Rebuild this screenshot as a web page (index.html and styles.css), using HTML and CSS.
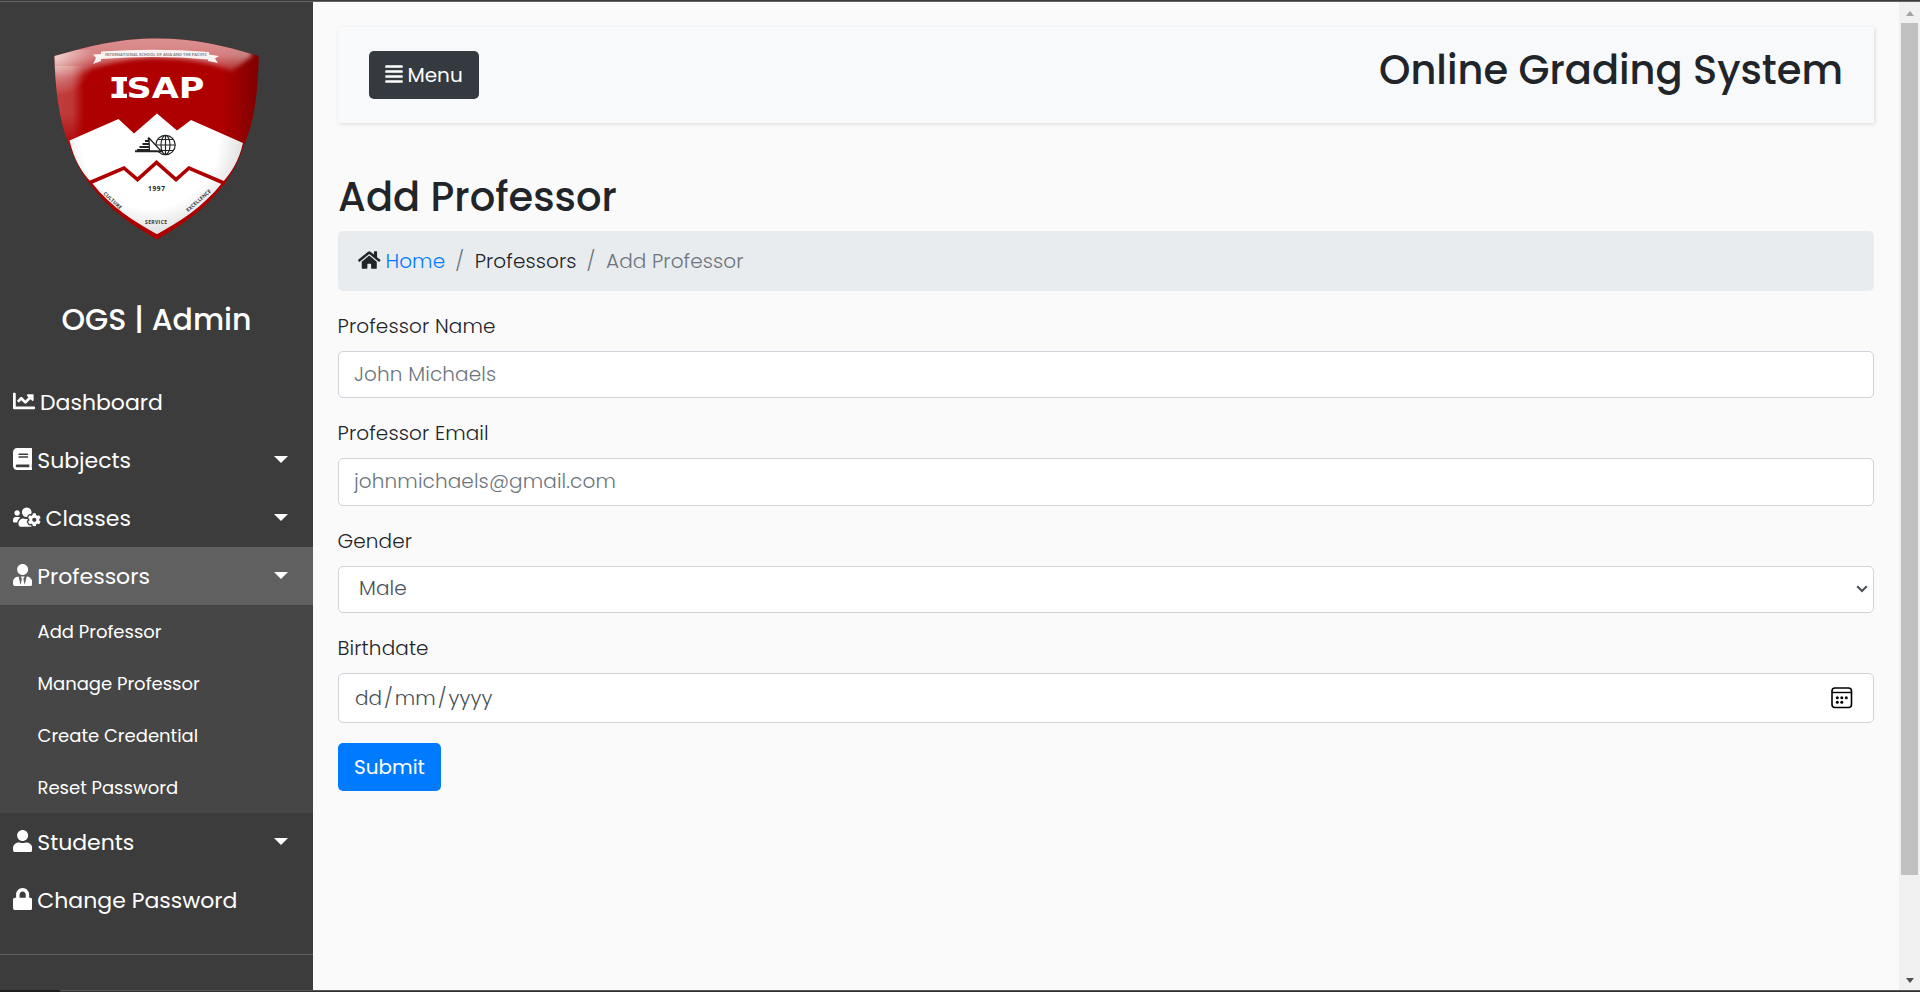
FILE: index.html
```html
<!DOCTYPE html>
<html lang="en">
<head>
<meta charset="utf-8">
<title>Online Grading System</title>
<link rel="stylesheet" href="styles.css">
</head>
<body>
<div class="screen">
  <div class="edge-top"></div>
  <div class="window">
    <nav class="sidebar">
      <div class="brand">
        <svg class="shield" width="313" height="250" viewBox="0 2 313 250">
          <defs>
            <clipPath id="body"><path d="M54.500 56C90 46 118 38.500 157 38.500S225 46 258.700 56C258 84 256 118 244 145C238 163 232 174 224 184C205 210 182 225 157 239.500C132 225 109 210 90 184C82 174 76 163 69 145C58 118 55 84 54.500 56Z"/></clipPath>
            <linearGradient id="gloss" x1="0" y1="0" x2="0" y2="1"><stop offset="0" stop-color="#fff" stop-opacity=".62"/><stop offset=".6" stop-color="#fff" stop-opacity=".5"/><stop offset="1" stop-color="#fff" stop-opacity=".05"/></linearGradient>
            <radialGradient id="corner" gradientUnits="userSpaceOnUse" cx="56" cy="58" r="38"><stop offset="0" stop-color="#fff" stop-opacity=".65"/><stop offset="1" stop-color="#fff" stop-opacity="0"/></radialGradient>
            <linearGradient id="side" x1="0" y1="0" x2="1" y2="0"><stop offset="0" stop-color="#fff" stop-opacity=".24"/><stop offset=".65" stop-color="#fff" stop-opacity=".22"/><stop offset="1" stop-color="#fff" stop-opacity="0"/></linearGradient>
            <linearGradient id="fall" x1="0" y1="0" x2="0" y2="1"><stop offset="0" stop-color="#fff"/><stop offset=".6" stop-color="#fff"/><stop offset="1" stop-color="#000"/></linearGradient>
            <mask id="fade"><rect x="50" y="60" width="40" height="90" fill="url(#fall)"/></mask>
            <linearGradient id="shade" x1="0" y1="0" x2="1" y2="0"><stop offset="0" stop-color="#300" stop-opacity="0"/><stop offset="1" stop-color="#300" stop-opacity=".4"/></linearGradient>
            <radialGradient id="snow" gradientUnits="userSpaceOnUse" cx="150" cy="140" r="95"><stop offset=".72" stop-color="#fff"/><stop offset="1" stop-color="#dedede"/></radialGradient>
            <filter id="soft"><feGaussianBlur stdDeviation="2"/></filter>
          </defs>
          <g clip-path="url(#body)">
            <path fill="#ae0000" d="M50 35h213v210H50z"/>
            <path fill="url(#shade)" d="M222 50h38v150h-38z"/>
            <path fill="url(#side)" mask="url(#fade)" d="M50 66h34v84H50z"/>
            <path fill="url(#gloss)" filter="url(#soft)" d="M45 25H244L252 56L232 71C205 61 180 58 157 58S105 62 75 76H45Z"/>
            <path fill="url(#corner)" d="M50 50h50v50H50z"/>
          </g>
          <path fill="url(#snow)" d="M69.500 140.500L118.500 119L134 133.500L157 113.500L177 130.500L191 120L243 143C239 160 232 172 222 183C202 208 179 222 157 234.300C135 222 112 208 92 183C81 172 74 159 69.500 140.500Z"/>
          <path fill="none" stroke="#ae0000" stroke-width="3.600" d="M89 183L124 168L137.500 179.500L156.500 162.500L176 179.500L189 168L225 183.500"/>
          <path fill="#fff" fill-opacity=".9" d="M93 64L96 58L93 54.500L101 54V51.500Q157 48 209 52V54.500L219 56L215 58.500L218 63L208 61V59.500Q157 55 101 59V61Z"/>
          <text class="motto" x="105" y="56.300" textLength="102">INTERNATIONAL SCHOOL OF ASIA AND THE PACIFIC</text>
          <text class="isap" x="113.500" y="98" textLength="91" lengthAdjust="spacingAndGlyphs">ISAP</text>
          <path fill="#fff" d="M111.500 77h15.500v4.300h-15.500zM111.500 93.700h15.500V98h-15.500z"/>
          <g fill="none" stroke="#222" stroke-width="1.200">
            <circle cx="165.500" cy="145" r="9.700"/><ellipse cx="165.500" cy="145" rx="4.500" ry="9.700"/>
            <path d="M165.500 135.500v19M156 145h19M158 139.500h15M158 150.500h15"/>
            <path fill="#fff" d="M149 138L161.500 151.500H149.500Z"/>
            <path stroke-width="1.900" d="M149 138l-1 1.500M149 141h-4M149 144h-6.500M149 147h-9.500M149 150h-12M135 151.300h27.500"/>
          </g>
          <text class="tiny year" x="148" y="191" textLength="17">1997</text>
          <text class="tiny" x="145" y="224" textLength="22">SERVICE</text>
          <text class="tiny" transform="translate(103 194) rotate(43)" textLength="23">CULTURE</text>
          <text class="tiny" transform="translate(188 212) rotate(-41)" textLength="31">EXCELLENCE</text>
        </svg>
        <h3 class="brand-name">OGS | Admin</h3>
      </div>
      <ul class="menu">
        <li class="item"><svg class="icon" viewBox="0 0 512 512"><path d="M496 384H64V80c0-8.840-7.160-16-16-16H16C7.160 64 0 71.160 0 80v336c0 17.670 14.330 32 32 32h464c8.840 0 16-7.160 16-16v-32c0-8.840-7.160-16-16-16zM464 96H345.940c-21.380 0-32.090 25.850-16.970 40.970l32.400 32.400L288 242.750l-73.370-73.370c-12.500-12.500-32.760-12.500-45.250 0l-68.690 68.690c-6.250 6.250-6.250 16.380 0 22.630l22.620 22.620c6.250 6.250 16.380 6.250 22.630 0L192 237.250l73.370 73.370c12.500 12.500 32.760 12.500 45.250 0l96-96 32.400 32.400c15.120 15.120 40.970 4.410 40.970-16.970V112c.010-8.840-7.150-16-15.990-16z"/></svg><span>Dashboard</span></li>
        <li class="item"><svg class="icon" viewBox="0 0 448 512"><path d="M448 360V24c0-13.300-10.700-24-24-24H96C43 0 0 43 0 96v320c0 53 43 96 96 96h328c13.300 0 24-10.700 24-24v-16c0-7.500-3.500-14.300-8.900-18.700-4.200-15.400-4.200-59.300 0-74.700 5.400-4.300 8.900-11.100 8.900-18.600zM128 134c0-3.300 2.700-6 6-6h212c3.300 0 6 2.700 6 6v20c0 3.300-2.700 6-6 6H134c-3.300 0-6-2.700-6-6v-20zm0 64c0-3.300 2.700-6 6-6h212c3.300 0 6 2.700 6 6v20c0 3.300-2.700 6-6 6H134c-3.300 0-6-2.700-6-6v-20zm253.400 250H96c-17.700 0-32-14.300-32-32 0-17.600 14.400-32 32-32h285.400c-1.900 17.100-1.900 46.900 0 64z"/></svg><span>Subjects</span><i class="caret"></i></li>
        <li class="item"><svg class="icon" viewBox="0 0 640 512"><path d="M610.500 341.300c2.600-14.100 2.600-28.500 0-42.600l25.800-14.900c3-1.700 4.300-5.200 3.300-8.500-6.700-21.600-18.200-41.200-33.200-57.400-2.300-2.500-6-3.100-9-1.400l-25.800 14.900c-10.900-9.300-23.400-16.500-36.900-21.300v-29.800c0-3.400-2.400-6.400-5.700-7.100-22.300-5-45-4.800-66.200 0-3.300.7-5.700 3.700-5.700 7.100v29.800c-13.500 4.800-26 12-36.900 21.300l-25.800-14.900c-2.900-1.700-6.700-1.100-9 1.400-15 16.200-26.500 35.800-33.200 57.400-1 3.300.4 6.800 3.300 8.500l25.800 14.900c-2.600 14.100-2.600 28.500 0 42.600l-25.800 14.900c-3 1.700-4.300 5.200-3.300 8.500 6.700 21.600 18.200 41.100 33.200 57.400 2.300 2.500 6 3.100 9 1.400l25.800-14.900c10.900 9.300 23.400 16.500 36.900 21.300v29.800c0 3.400 2.400 6.400 5.700 7.100 22.300 5 45 4.800 66.200 0 3.300-.7 5.700-3.700 5.700-7.100v-29.800c13.500-4.800 26-12 36.900-21.300l25.800 14.900c2.900 1.700 6.700 1.100 9-1.400 15-16.200 26.500-35.800 33.200-57.400 1-3.300-.4-6.800-3.300-8.500l-25.800-14.900zM496 368.500c-26.800 0-48.500-21.800-48.500-48.500s21.800-48.500 48.500-48.500 48.500 21.800 48.500 48.500-21.700 48.500-48.500 48.500zM96 224c35.300 0 64-28.700 64-64s-28.700-64-64-64-64 28.700-64 64 28.700 64 64 64zm224 32c1.900 0 3.700-.5 5.600-.6 8.300-21.700 20.500-42.100 36.300-59.200 7.400-8 17.900-12.600 28.900-12.600 6.900 0 13.700 1.800 19.600 5.300l7.900 4.600c.8-.5 1.600-.9 2.400-1.400 7-14.600 11.200-30.800 11.200-48 0-61.900-50.100-112-112-112S208 82.100 208 144c0 61.900 50.100 112 112 112zm105.200 194.500c-2.300-1.200-4.600-2.600-6.800-3.900-8.200 4.800-15.300 9.800-27.500 9.800-10.900 0-21.400-4.600-28.900-12.600-18.300-19.800-32.300-43.900-40.200-69.600-10.700-34.500 24.900-49.700 25.800-50.300-.1-2.600-.1-5.200 0-7.800l-7.900-4.600c-3.800-2.200-7-5-9.800-8.100-3.300.2-6.500.6-9.800.6-24.600 0-47.600-6-68.500-16h-8.300C179.600 288 128 339.600 128 403.200V432c0 26.500 21.500 48 48 48h255.400c-3.700-6-6.200-12.800-6.200-20.300v-9.200zM173.100 274.600C161.500 263.100 145.600 256 128 256H64c-35.300 0-64 28.700-64 64v32c0 17.700 14.300 32 32 32h65.900c6.300-47.400 34.900-87.300 75.200-109.400z"/></svg><span>Classes</span><i class="caret"></i></li>
        <li class="item active"><svg class="icon" viewBox="0 0 448 512"><path d="M224 256c70.700 0 128-57.300 128-128S294.700 0 224 0 96 57.300 96 128s57.300 128 128 128zm95.800 32.600L272 480l-32-136 32-56h-96l32 56-32 136-47.800-191.400C56.900 292 0 350.300 0 422.400V464c0 26.500 21.500 48 48 48h352c26.500 0 48-21.500 48-48v-41.600c0-72.100-56.900-130.400-128.200-133.800z"/></svg><span>Professors</span><i class="caret"></i></li>
        <li>
          <ul class="submenu">
            <li class="subitem">Add Professor</li>
            <li class="subitem">Manage Professor</li>
            <li class="subitem">Create Credential</li>
            <li class="subitem">Reset Password</li>
          </ul>
        </li>
        <li class="item"><svg class="icon" viewBox="0 0 448 512"><path d="M224 256c70.700 0 128-57.300 128-128S294.700 0 224 0 96 57.300 96 128s57.300 128 128 128zm89.600 32h-16.700c-22.200 10.200-46.900 16-72.900 16s-50.600-5.800-72.900-16h-16.700C60.200 288 0 348.200 0 422.400V464c0 26.500 21.500 48 48 48h352c26.500 0 48-21.500 48-48v-41.600c0-74.200-60.200-134.400-134.400-134.400z"/></svg><span>Students</span><i class="caret"></i></li>
        <li class="item"><svg class="icon" viewBox="0 0 448 512"><path d="M400 224h-24v-72C376 68.200 307.800 0 224 0S72 68.200 72 152v72H48c-26.500 0-48 21.500-48 48v192c0 26.500 21.500 48 48 48h352c26.500 0 48-21.500 48-48V272c0-26.500-21.500-48-48-48zm-104 0H152v-72c0-39.700 32.300-72 72-72s72 32.300 72 72v72z"/></svg><span>Change Password</span></li>
      </ul>
    </nav>
    <main class="content">
      <header class="topbar">
        <button class="btn btn-dark" type="button"><svg class="btn-icon" viewBox="0 0 448 512"><path d="M16 32h416a16 16 0 0 1 16 16v32a16 16 0 0 1-16 16H16A16 16 0 0 1 0 80V48A16 16 0 0 1 16 32zm0 128h416a16 16 0 0 1 16 16v32a16 16 0 0 1-16 16H16a16 16 0 0 1-16-16v-32a16 16 0 0 1 16-16zm0 128h416a16 16 0 0 1 16 16v32a16 16 0 0 1-16 16H16a16 16 0 0 1-16-16v-32a16 16 0 0 1 16-16zm0 128h416a16 16 0 0 1 16 16v32a16 16 0 0 1-16 16H16a16 16 0 0 1-16-16v-32a16 16 0 0 1 16-16z"/></svg>Menu</button>
        <h1 class="title">Online Grading System</h1>
      </header>
      <h1 class="title">Add Professor</h1>
      <ol class="breadcrumb">
        <li class="crumb"><svg class="home" viewBox="0 0 576 512"><path d="M280.370 148.260L96 300.110V464a16 16 0 0 0 16 16l112.060-.29a16 16 0 0 0 15.920-16V368a16 16 0 0 1 16-16h64a16 16 0 0 1 16 16v95.640a16 16 0 0 0 16 16.050L464 480a16 16 0 0 0 16-16V300L295.670 148.260a12.190 12.190 0 0 0-15.300 0zM571.600 251.470L488 182.560V44.050a12 12 0 0 0-12-12h-56a12 12 0 0 0-12 12v72.610L318.470 43a48 48 0 0 0-61 0L4.340 251.470a12 12 0 0 0-1.600 16.900l25.500 31A12 12 0 0 0 45.150 301l235.220-193.740a12.190 12.190 0 0 1 15.300 0L530.900 301a12 12 0 0 0 16.900-1.600l25.500-31a12 12 0 0 0-1.700-16.930z"/></svg><a class="link">Home</a></li>
        <li class="crumb">Professors</li>
        <li class="crumb current">Add Professor</li>
      </ol>
      <form class="form">
        <div class="group"><label class="label">Professor Name</label><input class="control" type="text" placeholder="John Michaels"></div>
        <div class="group"><label class="label">Professor Email</label><input class="control" type="text" placeholder="johnmichaels@gmail.com"></div>
        <div class="group"><label class="label">Gender</label><div class="control select"><span>Male</span><svg class="chevron" width="12" height="8" viewBox="0 0 12 8"><path d="M1.200 1.200L6 6L10.800 1.200"/></svg></div></div>
        <div class="group"><label class="label">Birthdate</label><div class="control date"><span class="date-text"><span>dd</span><span>/</span><span>mm</span><span>/</span><span>yyyy</span></span>
          <svg width="22" height="22" viewBox="0 0 22 22"><rect x="1" y="1" width="19.500" height="19.500" rx="3" fill="none" stroke="#000" stroke-width="1.600"/><path d="M1 5.500h19.500" stroke="#000" stroke-width="1.400"/><g><circle cx="6.300" cy="10.800" r="1.500"/><circle cx="10.800" cy="10.800" r="1.500"/><circle cx="15.300" cy="10.800" r="1.500"/><circle cx="6.300" cy="15.300" r="1.500"/><circle cx="10.800" cy="15.300" r="1.500"/></g></svg></div></div>
        <button class="btn btn-primary" type="button">Submit</button>
      </form>
    </main>
    <div class="scrollbar"><i class="arrow up"></i><div class="track"><div class="thumb"></div></div><i class="arrow down"></i></div>
  </div>
  <div class="edge-bottom"><div class="edge-dark"></div></div>
</div>
</body>
</html>
```
FILE: styles.css
```css
* { box-sizing: border-box; }
body {
  margin: 0;
  overflow: hidden;
  background: #fafafa;
  color: #212529;
  font: 300 20px/30px Poppins, Inter, "Open Sans", sans-serif;
}
ul, ol { list-style: none; margin: 0; padding: 0; }
.screen { display: flex; flex-direction: column; height: 992px; }
.edge-top { flex: none; height: 2px; background: #3b393b; border-bottom: 1px solid #666466; }
.edge-bottom { flex: none; height: 2px; background: #333032; border-top: 1px solid #555; display: flex; }
.edge-dark { width: 60px; height: 2px; margin-top: -1px; background: #1e1e1e; }
.window { display: flex; flex: 1; min-height: 0; }

.sidebar { width: 313px; flex: none; background: #3c3c3c; color: #fff; overflow: hidden; font-weight: 400; }
.brand { height: 371px; }
.shield { display: block; }
.brand-name { margin: 50px 0 0; font-size: 30px; line-height: 36px; font-weight: 500; text-align: center; }
.menu { padding-bottom: 25px; border-bottom: 1px solid #606060; }
.item { display: flex; align-items: center; height: 58px; padding: 0 25px 0 13px; font-size: 22px; }
.item span { padding-top: 2px; }
.item.active { background: #606060; }
.icon { height: 22px; margin: -2px 5px 0 0; fill: #fff; }
.caret { margin: -1px 0 0 auto; border: 7px solid transparent; border-top-color: #fff; border-bottom: 0; }
.submenu { background: #464646; }
.subitem { height: 52px; padding-left: 37.500px; font-size: 18px; line-height: 53px; }

.content { flex: 1; padding: 25px 25px 0; }
.topbar {
  display: flex;
  justify-content: space-between;
  align-items: center;
  height: 96px;
  margin-bottom: 50px;
  padding: 0 31px;
  background: #f8f9fb;
  box-shadow: 1px 1px 4px rgba(0, 0, 0, .13);
}
.title { margin: 0 0 10px; font-size: 40px; line-height: 48px; font-weight: 500; }
.btn {
  display: inline-flex;
  align-items: center;
  height: 48px;
  padding: 0 16px;
  border: 0;
  border-radius: 5px;
  color: #fff;
  font: 400 20px/30px Poppins, Inter, "Open Sans", sans-serif;
}
.btn-dark { background: #343a40; }
.btn-primary { background: #007bff; }
.btn-icon { width: 18px; height: 20px; margin: -2px 4.500px 0 0; fill: #fff; }
.breadcrumb {
  display: flex;
  height: 60px;
  margin-bottom: 20px;
  padding: 15px 20px;
  border-radius: 5px;
  background: #e9ecef;
  letter-spacing: .1px;
}
.crumb { display: flex; align-items: center; }
.crumb + .crumb::before { content: "/"; padding: 0 10.500px 0 10px; color: #6c757d; }
.crumb.current { color: #6c757d; }
.home { width: 22.500px; height: 20px; margin: -2px 5px 0 0; fill: #212529; }
.link { color: #007bff; }

.form { letter-spacing: .12px; }
.group { margin-bottom: 20px; }
.label { display: block; margin: 0 0 10px -.5px; }
.control {
  display: flex;
  align-items: center;
  width: 100%;
  height: 47.300px;
  padding: 0 15px;
  border: 1px solid #ced4da;
  border-radius: 5px;
  background: #fff;
  color: #495057;
  font: inherit;
  letter-spacing: inherit;
}
input.control { padding-bottom: 1px; }
.control::placeholder { color: #6c757d; opacity: 1; }
.select { justify-content: space-between; padding: 0 5px 2px 20px; }
.chevron { margin-top: 1px; fill: none; stroke: #495057; stroke-width: 2; }
.date { justify-content: space-between; height: 50px; padding-right: 20px; }
.date-text { display: flex; gap: 1.800px; padding-left: 1px; }

.scrollbar { display: flex; flex-direction: column; align-items: center; width: 21px; background: #f1f1f1; }
.track { flex: 1; width: 17px; }
.thumb { height: 852px; background: #c1c1c1; }
.arrow { width: 0; border: 4.500px solid transparent; }
.up { margin: 9px 0 7px; border-top: 0; border-bottom: 5px solid #a3a3a3; }
.down { margin: 7px 0 7px; border-bottom: 0; border-top: 5px solid #505050; }
.motto { font: 700 4px "Open Sans", sans-serif; fill: #888; }
.isap { font: 700 29px "DejaVu Sans", sans-serif; fill: #fff; }
.tiny { font: 700 5px "Open Sans", sans-serif; fill: #333; }
.year { font-size: 6.500px; fill: #222; }
```
